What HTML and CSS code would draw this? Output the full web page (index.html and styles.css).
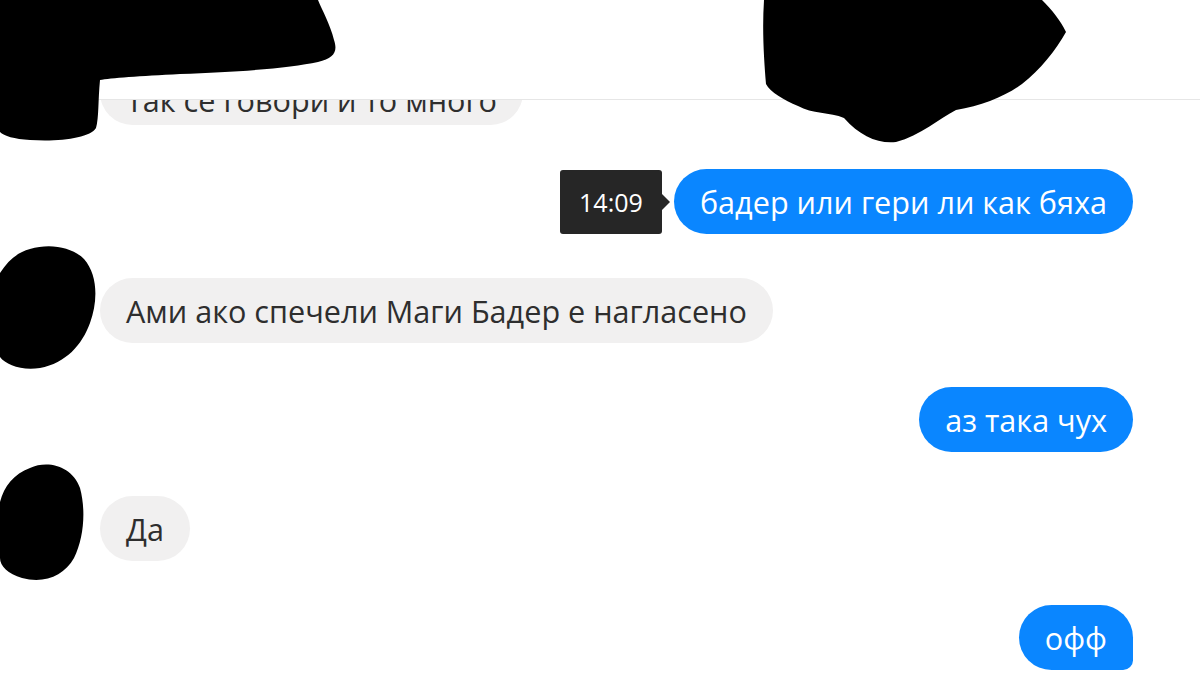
FILE: index.html
```html
<!DOCTYPE html>
<html lang="bg">
<head>
<meta charset="utf-8">
<title>Messenger</title>
<link rel="stylesheet" href="styles.css">
</head>
<body>
<div class="page">
  <header class="header"></header>
  <main class="chat">
    <div class="row in first">
      <div class="avatar"></div>
      <div class="bubble gray">Так се говори и то много</div>
    </div>
    <div class="row out">
      <div class="tip">14:09</div>
      <div class="bubble blue">бадер или гери ли как бяха</div>
    </div>
    <div class="row in">
      <div class="avatar">
        <svg class="blob blob-a" width="100" height="125" viewBox="0 0 100 125"><path d="M30 4 C50 -2 72 2 84 14 C98 30 98 56 90 78 C82 100 66 118 40 123 C22 126 6 120 0 112 L0 28 C8 16 16 8 30 4 Z" fill="#000"/></svg>
      </div>
      <div class="bubble gray">Ами ако спечели Маги Бадер е нагласено</div>
    </div>
    <div class="row out">
      <div class="bubble blue">аз така чух</div>
    </div>
    <div class="row in">
      <div class="avatar">
        <svg class="blob blob-b" width="85" height="120" viewBox="0 0 85 120"><path d="M30 6 C48 -2 72 4 80 26 C86 48 84 76 74 96 C64 114 44 122 22 116 C8 112 0 104 0 96 L0 40 C4 24 14 12 30 6 Z" fill="#000"/></svg>
      </div>
      <div class="bubble gray">Да</div>
    </div>
    <div class="row out">
      <div class="bubble blue last">офф</div>
    </div>
  </main>
  <svg class="scribble scribble-left" width="340" height="145" viewBox="0 0 340 145"><path d="M0 0 L318 0 C322 10 330 24 334 40 C338 52 334 58 318 62 C290 68 240 72 180 74 C140 76 110 78 100 80 C98 100 99 118 96 128 C90 138 60 142 30 140 C14 139 4 136 0 132 Z" fill="#000"/></svg>
  <svg class="scribble scribble-right" width="310" height="145" viewBox="0 0 310 145"><path d="M4 0 L282 0 C292 10 300 20 306 32 C296 50 280 70 262 84 C246 96 222 106 196 110 C180 118 160 136 136 142 C118 144 100 136 84 118 C70 112 52 114 38 106 C24 100 10 92 6 84 C4 60 2 30 4 0 Z" fill="#000"/></svg>
</div>
</body>
</html>
```
FILE: styles.css
```css
* { box-sizing: border-box; }
html, body { margin: 0; padding: 0; }
body {
  width: 1200px;
  height: 675px;
  overflow: hidden;
  background: #fff;
  font-family: "Open Sans", "Noto Sans", sans-serif;
}
.page {
  position: relative;
  width: 1200px;
  height: 675px;
  display: flex;
  flex-direction: column;
  overflow: hidden;
}
.header {
  height: 100px;
  flex: none;
  border-bottom: 1px solid #e6e6e6;
  background: #fff;
}
.chat {
  flex: 1;
  overflow: hidden;
  display: flex;
  flex-direction: column;
  gap: 44px;
  padding: 0 67px 0 0;
}
.row {
  display: flex;
  align-items: center;
  flex: none;
}
.row.first { margin-top: -40px; }
.row.first .bubble { padding-top: 14px; }
.row.out { justify-content: flex-end; }
.avatar {
  position: relative;
  width: 100px;
  height: 65px;
  flex: none;
}
.blob { position: absolute; left: 0; }
.blob-a { top: -33px; }
.blob-b { top: -34px; }
.bubble {
  height: 65px;
  border-radius: 33px;
  padding: 0 26px;
  display: flex;
  align-items: center;
  font-size: 30.6px;
  white-space: nowrap;
}
.gray {
  background: #f1f0f0;
  color: #2e2e2e;
}
.blue {
  background: #0a86ff;
  color: #fff;
}
.blue.last { border-bottom-right-radius: 10px; }
.tip {
  position: relative;
  height: 64px;
  width: 102px;
  margin-right: 12px;
  background: #262626;
  color: #fff;
  border-radius: 3px;
  display: flex;
  align-items: center;
  justify-content: center;
  font-size: 25px;
}
.tip::after {
  content: "";
  position: absolute;
  right: -8px;
  top: 50%;
  margin-top: -8px;
  border-left: 8px solid #262626;
  border-top: 8px solid transparent;
  border-bottom: 8px solid transparent;
}
.scribble { position: absolute; top: 0; }
.scribble-left { left: 0; }
.scribble-right { left: 760px; }
```
